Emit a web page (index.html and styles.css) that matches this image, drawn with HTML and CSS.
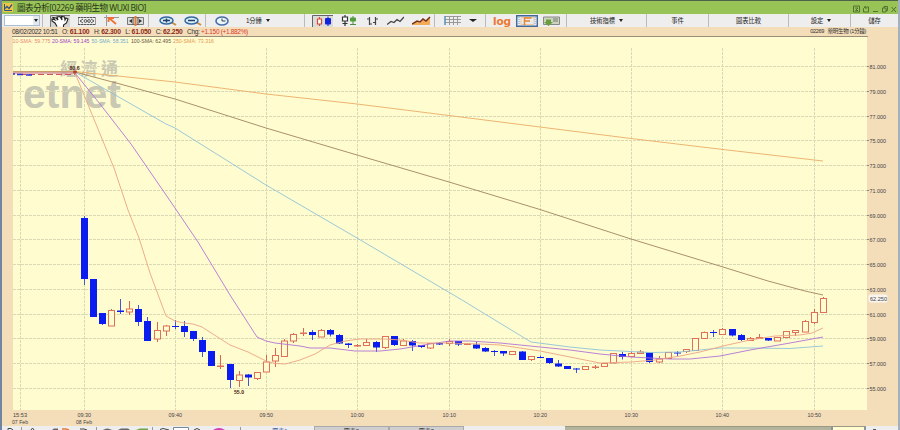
FILE: index.html
```
<!DOCTYPE html>
<html lang="zh-Hant">

<head>
    <meta charset="UTF-8">
    <title>圖表分析[02269 藥明生物 WUXI BIO]</title>
    <link rel="stylesheet" href="styles.css">
</head>

<body>
    <div class="window">

        <div class="titlebar">
            <svg class="app-icon" width="10" height="9" viewBox="0 0 10 9">
                <rect width="10" height="9" fill="#f3c343" />
                <path d="M1.5 1v6.5H9" stroke="#31547f" fill="none" />
                <path d="M2 5.5l2-2 2 2 3-4" stroke="#31547f" fill="none" stroke-width="1.3" />
            </svg>
            <span class="title">圖表分析[02269 藥明生物 WUXI BIO]</span>
            <svg class="controls" width="44" height="8" viewBox="0 0 44 8" fill="none" stroke="#496a2c" stroke-width=".9">
                <path d="M.5 1h6v6h-6zM2 3h3L2.500 5.500H5" />
                <path d="M10.500 3.500v3.500h5v-5h-2M10.500 3.500l2-2M11 2h2v2" />
                <path d="M20 6.500h5M29.500 3h3.500v4h-3.500zM31 3V1.500h3.500v4H33M38.500 2l4.500 5M43 2l-4.500 5" />
            </svg>
        </div>

        <div class="toolbar">
            <div class="group select">
                <span class="combo"><i class="caret"></i></span>
            </div>
            <div class="group tools">
                <svg width="20" height="12" viewBox="0 0 20 12">
                    <rect width="20" height="12" fill="#d6d6d3" />
                    <path d="M.5 12V.5H20" stroke="#777" fill="none" />
                    <path d="M7 11.500L5 8 2 6V4l3 1-2-2.500 3 .5 2 2-1-3 3-.5 2 3.500-.5-3.500 3 .5.5 3 1-2 2 1-1.500 4-3 2v2" fill="#fff" stroke="#222" stroke-width="1.100" />
                </svg>
                <svg width="18" height="10" viewBox="0 0 18 10" fill="none" stroke="#555">
                    <rect x=".5" y="1.500" width="17" height="7" stroke="#999" />
                    <path d="M0 1.500h18M0 8.500h18" stroke-dasharray="2 1" />
                    <path d="M5 3L2 5l3 2M13 3l3 2-3 2" />
                    <circle cx="7.500" cy="5" r="1.400" />
                    <circle cx="11" cy="5" r="1.400" />
                </svg>
                <svg width="15" height="11" viewBox="0 0 15 11" fill="none">
                    <path d="M0 2.500h15M2.500 0v11" stroke="#999" />
                    <path d="M5 3l7 6M4.500 7V3H10" stroke="#ed7135" stroke-width="1.800" />
                </svg>
                <svg width="17" height="10" viewBox="0 0 17 10">
                    <path d="M.5 1.500h16v7H.5z" fill="#ddd" stroke="#777" />
                    <path d="M5 3v4L2 5zM12 3v4l3-2z" fill="#333" />
                    <path d="M7.500 0h2v10h-2z" fill="#e87b32" />
                    <path d="M6 1v8M11 1v8" stroke="#555" />
                </svg>
            </div>
            <div class="group zooms">
                <svg width="18" height="10" viewBox="0 0 18 10" fill="none">
                    <path d="M12 6l5 3" stroke="#c88d3c" stroke-width="2" />
                    <ellipse cx="7.500" cy="4.500" rx="6.500" ry="3.500" fill="#d9eef8" stroke="#34699f" stroke-width="1.500" />
                    <path d="M4 4.500h7M7.500 2.500v4" stroke="#203f65" stroke-width="1.500" />
                </svg>
                <svg width="18" height="10" viewBox="0 0 18 10" fill="none">
                    <path d="M12 6l5 3" stroke="#c88d3c" stroke-width="2" />
                    <ellipse cx="7.500" cy="4.500" rx="6.500" ry="3.500" fill="#d9eef8" stroke="#34699f" stroke-width="1.500" />
                    <path d="M4 4.500h7" stroke="#203f65" stroke-width="1.500" />
                </svg>
            </div>
            <div class="group interval">
                <svg width="14" height="10" viewBox="0 0 14 10" fill="none">
                    <ellipse cx="7" cy="5" rx="6" ry="4" fill="#edf4fa" stroke="#456faa" stroke-width="1.600" />
                    <path d="M7 2.500V5h3.500" stroke="#345" />
                </svg>
                <span>1分鐘</span><i class="caret"></i>
            </div>
            <div class="group types">
                <svg width="21" height="12" viewBox="0 0 21 12">
                    <rect width="21" height="12" fill="#dcdcda" />
                    <path d="M.5 12V.500H21" stroke="#666" fill="none" />
                    <path d="M7.500 2v2M7.500 9v2M5.500 4h4v5h-4z" stroke="#d44b31" fill="#fff" stroke-width="1.200" />
                    <path d="M16 1.500v9.500" stroke="#1522dc" />
                    <rect x="13" y="3" width="6" height="6.500" rx="1" fill="#1522dc" />
                </svg>
                <svg width="16" height="11" viewBox="0 0 16 11">
                    <path d="M4 0v2M4 6v5M1.500 2h5v4h-5zM1.500 8.500h5" stroke="#333" fill="#fff" stroke-width="1.200" />
                    <path d="M12 1v9M9 9.500h6" stroke="#4f8d3d" />
                    <rect x="9" y="2.500" width="6" height="4" rx="1" fill="#4f9d3d" />
                </svg>
                <svg width="14" height="10" viewBox="0 0 14 10" fill="none" stroke="#444" stroke-width="1.200">
                    <path d="M4.500 1v8M2 3h2.500M4.500 8H7M10.500 1v8M8 6.500h2.500M10.500 3H13" />
                </svg>
                <svg width="17" height="10" viewBox="0 0 17 10" fill="none" stroke="#444" stroke-width="1.300">
                    <path d="M0 8.500l4-3 3 1 3-3 3 2 4-4.500" />
                </svg>
                <svg width="19" height="10" viewBox="0 0 19 10">
                    <path d="M0 9l5-4 3 2 3-4 3 2 4-4v8z" fill="#f4aa57" />
                    <path d="M0 8l5-3 3 1 3-3 3 2 4-4" fill="none" stroke="#70301b" stroke-width="1.500" />
                </svg>
            </div>
            <div class="group grid-pick">
                <svg width="17" height="9" viewBox="0 0 17 9" fill="none" stroke="#999">
                    <path d="M1 .5h16M1 3.500h16M1 6.500h16M5.500 0v9M9.500 0v9M13.500 0v9" />
                    <path d="M1 0v9" stroke="#5792bb" stroke-width="1.500" />
                </svg>
                <i class="caret wide"></i>
            </div>
            <div class="group extras">
                <span class="log">log</span>
                <svg width="22" height="12" viewBox="0 0 22 12" fill="none">
                    <path d="M.7.700h20.600v10.600H.7z" fill="#e5edf3" stroke="#42699a" stroke-width="1.400" />
                    <path d="M3 2v8M19 2v8" stroke="#789cc0" stroke-dasharray="1 1" />
                    <path d="M5 2.500h13v7H5z" stroke="#f3c79f" />
                    <path d="M8.500 10V3h7M9 6h5" stroke="#ed812c" stroke-width="1.500" />
                </svg>
                <svg width="17" height="10" viewBox="0 0 17 10">
                    <path d="M.5 1h16v7.500H.5z" fill="#ccd5bd" stroke="#888" />
                    <path d="M10 3h5M10 5h5" stroke="#777" />
                    <path d="M3 3.500h5V6h2l-4.500 4L1 6h2z" fill="#6a9d3e" />
                </svg>
            </div>
            <div class="group menu menu-ta">技術指標<i class="caret"></i></div>
            <div class="group menu menu-event">事件</div>
            <div class="group menu menu-compare">圖表比較</div>
            <div class="group menu menu-set">設定<i class="caret"></i></div>
            <div class="group menu menu-save">儲存</div>
        </div>

        <div class="quote">
            <span class="time">08/02/2022 10:51</span>
            <span>O: <b>61.100</b></span>
            <span>H: <b>62.300</b></span>
            <span>L: <b>61.050</b></span>
            <span>C: <b>62.250</b></span>
            <span>Chg: <em>+1.150 (+1.882%)</em></span>
            <span class="symbol">02269 &nbsp; 藥明生物 (1分鐘)</span>
        </div>

        <svg class="chart" width="896" height="390" viewBox="2 36 896 390">
            <rect class="plot" x="13" y="36" width="854" height="374" />
            <path class="top-line" d="M12 36.500h856" />
            <g class="watermark">
                <text class="wm-cn" x="60" y="75" textLength="58">經濟通</text>
                <text class="wm-en" x="23" y="108" textLength="98" lengthAdjust="spacingAndGlyphs">etnet</text>
            </g>
            <g id="grid"></g>
            <g class="sma-legend">
                <text class="c10" x="12.500" y="43" textLength="38" lengthAdjust="spacingAndGlyphs">10-SMA: 59.775</text>
                <text class="c20" x="52" y="43" textLength="37.500" lengthAdjust="spacingAndGlyphs">20-SMA: 59.145</text>
                <text class="c50" x="91.500" y="43" textLength="37" lengthAdjust="spacingAndGlyphs">50-SMA: 58.351</text>
                <text class="c100" x="131" y="43" textLength="40" lengthAdjust="spacingAndGlyphs">100-SMA: 62.495</text>
                <text class="c250" x="173" y="43" textLength="41" lengthAdjust="spacingAndGlyphs">250-SMA: 73.316</text>
            </g>
            <g id="candles"></g>
            <g class="sma">
                <polyline class="l250" points="13,71.500 75,71.500 175,82 266,94 357,104 449,115.500 540,127 631,138.500 723,149.500 823,161" />
                <polyline class="l100" points="13,72 75,72 120,84 175,99 266,128 357,155 449,182 540,209.500 631,239 723,267 768,281 805,291 823,295" />
                <polyline class="l50" points="75,72 166,124 175,128 215,153 266,185 357,238 462,300 531,342 570,347 600,350 650,352.500 680,352 720,348 750,348 790,348.500 823,346" />
                <polyline class="l20" points="13,73 75,73 100,104 131,144 175,208 198,242 230,295 257,337 266,341 275,343 300,346 310,348 330,348 355,351 380,351 400,349 430,344 450,341 470,341 500,343 540,347 570,350 600,354 631,357 650,358 670,359 690,359 720,356 750,350 790,343 823,337" />
                <polyline class="l10" points="13,73 75,73 114,168 128,210 139,238 150,273 166,316 175,321 184,323 193,324 202,327 230,345 248,352 266,361 275,363.500 285,364 300,360 315,354 330,345 345,341 360,339 385,339 400,340 420,343 448,343 480,344 500,345 540,351 570,357 600,363 631,362 655,360 680,356 700,352 723,346 750,340 775,336 800,335 812,333 823,328" />
            </g>
            <path class="open-dash" d="M20 74.500h55" />
            <path class="open-dash blue" d="M13 74h2M17 74.500h6M26 75h6" />
            <path class="mark" d="M75 70v4M73 71l4 2M77 71l-4 2" />
            <text class="extreme" x="74.500" y="69.500">80.6</text>
            <text class="extreme" x="239" y="393.500">55.0</text>
            <g id="axis"></g>
            <rect class="last-tag" x="868.500" y="294.500" width="19" height="8" rx="2" />
            <text class="label" x="870" y="301" textLength="17" lengthAdjust="spacingAndGlyphs">62.250</text>
        </svg>

        <div class="bottom">
            <svg class="bottom-icons" width="244" height="4" viewBox="2 426 244 4">
                <path d="M8 430v-1.500h3l2 1.500M31 430l1.500-2 1.500 2M80 429h4l3 1M194 430q3-3 6 0M160 429.500l3-1 6 1.500" stroke="#444" fill="none" />
                <path d="M52 430l2-1.500h4v1.500zM103 430q4-3 9 0zM118 430l3-1.500h7l2 1.500z" fill="#666" />
                <path d="M62 429h4l3 1" stroke="#e57c35" stroke-width="1.400" fill="none" />
                <path d="M136 430l4-1.500h8v1.500z" fill="#71a348" />
                <path d="M173.500 430v-2.500h15v2.500" fill="#fff" stroke="#789" />
                <path d="M213 430q6-4 12 0z" fill="#d43cae" />
                <path d="M21.500 427v3M96.500 427v3M152.500 427v3M240.500 427v3" stroke="#999" />
            </svg>
            <div class="tab current">圖表1</div>
            <div class="tab">圖表2</div>
            <div class="tab">圖表3</div>
            <div class="scroll"><span class="range"></span></div>
            <span class="up"></span>
        </div>
    </div>

    <script src="script.js"></script>
</body>

</html>
```
FILE: styles.css
```
body {
    margin: 0;
    background-color: #eee;
    font-family: "Liberation Sans", "Noto Sans CJK TC", sans-serif;
    color: #333;
}

.window {
    width: 896px;
    height: 430px;
    border-left: 2px solid #7185a3;
    border-right: 2px solid #a3b0bd;
    background-color: #f4deba;
    overflow: hidden;
}

svg {
    display: block;
    flex: none;
}

/* Title */

.titlebar {
    display: flex;
    align-items: center;
    box-sizing: border-box;
    height: 14px;
    border-top: 1px solid #4d6248;
    background-color: #98c356;
    padding-right: 1px;
}

.app-icon {
    margin-left: 1px;
}

.title {
    margin-left: 4px;
    font-family: "Open Sans", "Noto Sans CJK TC", sans-serif;
    font-size: 8.6px;
    line-height: 13px;
    letter-spacing: -0.52px;
    padding-top: 2px;
    color: #26351a;
    white-space: nowrap;
}

.controls {
    margin-left: auto;
    margin-top: 2px;
}

/* Toolbar */

.toolbar {
    display: flex;
    height: 13px;
    background-color: #eee;
    font-size: 6.3px;
    line-height: 13px;
    color: #222;
}

.group {
    display: flex;
    align-items: center;
    justify-content: space-between;
    flex: none;
    box-sizing: border-box;
    height: 13px;
    border-right: 1px solid #bbb;
    white-space: nowrap;
}

.caret {
    border: 2.5px solid transparent;
    border-top: 3px solid #222;
    border-bottom: 0;
    margin-left: 4px;
}

.caret.wide {
    border-left-width: 4px;
    border-right-width: 4px;
    margin-left: 0;
}

.select {
    width: 41px;
    padding-left: 2px;
}

.combo {
    display: flex;
    align-items: center;
    justify-content: flex-end;
    box-sizing: border-box;
    width: 36px;
    height: 11px;
    border: 1px solid #a9bfd1;
    background: linear-gradient(to right, #fff 28px, #e3e9ee 28px);
    padding-right: 1px;
}

.tools {
    width: 106px;
    padding: 0 4px 0 7px;
}

.zooms {
    width: 57px;
    padding: 0 3px 0 10px;
}

.interval {
    width: 99px;
    padding-left: 9px;
    justify-content: flex-start;
}

.interval span {
    margin-left: 17px;
    letter-spacing: -0.2px;
}

.types {
    width: 130px;
    padding: 0 3px 0 7px;
}

.grid-pick {
    width: 51px;
    padding: 0 8px 0 9px;
}

.extras {
    width: 81px;
    padding: 0 6px 0 7px;
}

.log {
    font: bold 10.5px/10px "DejaVu Sans", sans-serif;
    letter-spacing: -0.2px;
    color: #ed7930;
}

.menu {
    justify-content: center;
}

.menu-ta {
    width: 80px;
}

.menu-event {
    width: 62px;
}

.menu-compare {
    width: 80px;
}

.menu-set {
    width: 62px;
    padding-left: 3px;
}

.menu-save {
    width: 47px;
    border-right: 0;
}

/* Quote line */

.quote {
    display: flex;
    gap: 4.6px;
    height: 9px;
    padding: 0 32px 0 10px;
    font-size: 6.5px;
    line-height: 9px;
    letter-spacing: -0.32px;
    white-space: nowrap;
}

.quote b {
    color: #8c2a18;
    font-size: 6.8px;
    letter-spacing: -0.22px;
}

.quote em {
    color: #df3828;
    font-style: normal;
}

.quote .symbol {
    margin-left: auto;
    font-size: 5.6px;
    letter-spacing: -0.35px;
}

/* Chart */

.plot {
    fill: #fffdcf;
}

.top-line {
    stroke: #998e78;
}

.watermark {
    fill: #c9c8b3;
    font-weight: bold;
}

.wm-cn {
    font-size: 17px;
    font-family: "Noto Sans CJK TC", sans-serif;
}

.wm-en {
    font-size: 40px;
}

.grid-line {
    stroke: #d9d9b6;
    stroke-dasharray: 3 1;
}

.label {
    font-size: 5.8px;
    fill: #444;
}

.tick {
    stroke: #888;
}

.sma-legend {
    font-size: 5.8px;
}

.c10 { fill: #e88770; }
.c20 { fill: #a03cc6; }
.c50 { fill: #75a9cc; }
.c100 { fill: #685340; }
.c250 { fill: #e6974d; }

.sma polyline {
    fill: none;
    stroke-width: 0.9;
}

.sma .l10 { stroke: #eba483; }
.sma .l20 { stroke: #b273d8; }
.sma .l50 { stroke: #8fc2d8; }
.sma .l100 { stroke: #a08360; }
.sma .l250 { stroke: #eaac68; }

.up-candle {
    fill: #fffdcf;
    stroke: #df715a;
}

.down-candle {
    fill: #0a1cf0;
}

.up-wick {
    stroke: #d36854;
}

.down-wick {
    stroke: #4254dc;
}

.open-dash {
    stroke: #cf5560;
    stroke-dasharray: 6 3;
}

.open-dash.blue {
    stroke: #2a2fd8;
    stroke-width: 1.5;
    stroke-dasharray: none;
}

.mark {
    stroke: #b33a25;
}

.extreme {
    font-size: 5.2px;
    font-weight: bold;
    fill: #4c1c12;
    text-anchor: middle;
}

.last-tag {
    fill: #f8f5ef;
}

/* Bottom strip */

.bottom {
    display: flex;
    height: 4px;
    background-color: #eee;
    overflow: hidden;
}

.tab {
    box-sizing: border-box;
    width: 75px;
    height: 4px;
    border: 1px solid #aaa;
    border-bottom: 0;
    background-color: #cfcfcf;
    font-size: 6px;
    line-height: 8px;
    text-align: center;
    overflow: hidden;
}

.tab.current {
    width: 68px;
    border: 0;
    padding-top: 1px;
    background-color: #eee;
    color: #2b4c91;
}

.scroll {
    display: flex;
    justify-content: flex-end;
    box-sizing: border-box;
    width: 301px;
    height: 4px;
    margin-left: 101px;
    border-top: 1px solid #999985;
    background-color: #b4b49c;
}

.range {
    box-sizing: border-box;
    width: 35px;
    border: 2px solid #8795a2;
    border-width: 0 2px;
    background-color: #fffdcf;
}

.up {
    width: 3px;
    height: 2px;
    margin: 3px 0 0 7px;
    background-color: #555;
}
```
FILE: script.js
```
const NS = "http://www.w3.org/2000/svg";
const STEP = 9.127;
const X0 = 84;

// high, body top, body bottom, low, 1 = up / 0 = down; one row a minute from 09:30
const candles = [
    [216, 218, 279, 285, 0], [279, 279, 317, 317, 0], [313, 313, 324, 325, 0], [309, 310.5, 326, 326, 1],
    [299, 310.5, 312, 314, 0], [301, 309, 312, 315, 1], [305, 309, 322, 326, 0], [317, 321, 341, 341, 0],
    [322, 330.5, 339, 342, 1], [325, 326, 331, 336, 1], [320, 326, 327, 329, 0], [321, 326, 332, 337, 0],
    [331, 331, 339, 341, 0], [337, 340, 352, 357, 0], [351, 351, 366, 366, 0], [355, 366, 366.5, 369, 1],
    [364, 364, 380, 388, 0], [371, 375, 380.5, 387, 1], [374, 374.5, 377.5, 386, 0], [372, 372.5, 378.5, 380, 1],
    [355, 362, 372, 372, 1], [348, 355.5, 361, 367, 1], [339, 341, 356.5, 357, 1], [333, 334.5, 341, 343, 1],
    [328, 333, 333.5, 336, 1], [330, 332, 335, 340, 0], [329, 330.5, 337, 337, 1], [329, 330, 334.5, 336.5, 0],
    [334, 335, 343.5, 344, 0], [343, 343.5, 345, 348, 0], [344, 345.5, 346, 347, 1], [339, 342.5, 345.5, 346, 1],
    [341, 342, 347.5, 352, 0], [336, 336.5, 347.5, 349, 1], [336, 336, 345, 346, 0], [339, 341, 345.5, 346, 1],
    [340, 341, 345.5, 351, 0], [345, 345, 347, 348, 0], [343, 343.5, 348, 349, 1], [342, 343, 344.5, 345, 0],
    [339, 341.5, 343.5, 346, 1], [341, 341, 344.5, 346, 0], [343, 344, 344.5, 345, 1], [342, 344.5, 348.5, 349, 0],
    [347, 348, 351.5, 352, 0], [350, 351, 352, 356, 0], [351, 351, 353.5, 356, 0], [351, 351.5, 354.5, 355, 1],
    [351, 351.5, 360, 360, 0], [356, 356.5, 359.5, 361, 1], [355.5, 357, 358, 358, 0], [358, 358, 363, 364, 0],
    [360, 363.5, 366.5, 367, 0], [366, 366, 369, 369, 0], [368, 368.5, 369.5, 373, 0], [366, 366.5, 369.5, 370, 1],
    [365, 367, 367.5, 369, 1], [363, 363.5, 366.5, 367, 1], [353, 353.5, 363, 363, 1], [352, 354, 357, 359.5, 0],
    [352, 353.5, 356.5, 357, 1], [350, 352, 353.5, 354, 1], [352, 352.5, 362, 363, 0], [356, 359, 362, 363, 1],
    [352, 352.5, 358.5, 359, 1], [351, 352.5, 353.5, 356, 0], [349, 349.5, 351.5, 353, 1], [338, 338.5, 350.5, 351, 1],
    [331.5, 332.5, 338.5, 339, 1], [330, 332, 333, 337, 0], [328, 329.5, 334.5, 335, 1], [329, 329, 335.5, 336.5, 0],
    [334, 335, 340, 341, 0], [337, 338.5, 340.5, 341, 1], [334, 337.5, 338.5, 339, 1], [338, 338, 340.5, 341, 0],
    [337, 337.5, 341, 341, 1], [331, 331.5, 337.5, 338, 1], [330, 330.5, 332.5, 336, 1], [320, 321.5, 332, 332, 1],
    [309, 312.5, 322.5, 324, 1], [297, 298.5, 312.5, 313, 1]
];

function add(parent, tag, attrs, text) {
    const el = document.createElementNS(NS, tag);
    for (const key in attrs) {
        el.setAttribute(key, attrs[key]);
    }
    if (text) {
        el.textContent = text;
    }
    document.getElementById(parent).appendChild(el);
}

function label(x, y, width, text) {
    add("axis", "text", { class: "label", x: x, y: y, textLength: width, lengthAdjust: "spacingAndGlyphs" }, text);
}

// Price lines
for (let i = 0; i < 14; i++) {
    const y = Math.round(66 + i * 24.75) + 0.5;
    add("grid", "path", { class: "grid-line", d: `M13 ${y}H867` });
    add("axis", "path", { class: "tick", d: `M867 ${y}h2` });
    label(869.5, y + 2, 16.5, (81 - i * 2) + ".000");
}

// Time lines
const times = ["09:30", "09:40", "09:50", "10:00", "10:10", "10:20", "10:30", "10:40", "10:50"];
add("grid", "path", { class: "grid-line", d: "M20.5 48V410" });
label(13, 416.5, 14, "15:53");
label(12, 423.5, 16, "07 Feb");
label(76, 423.5, 16, "08 Feb");
times.forEach((time, i) => {
    const x = Math.floor(X0 + i * 10 * STEP) + 0.5;
    add("grid", "path", { class: "grid-line", d: `M${x} 48V410` });
    label(x - 7, 416.5, 13.5, time);
});

candles.forEach(([high, top, bottom, low, up], i) => {
    const x = Math.floor(X0 + i * STEP) + 0.5;
    const name = up ? "up" : "down";
    add("candles", "path", { class: name + "-wick", d: `M${x} ${high}V${low}` });
    add("candles", "rect", {
        class: name + "-candle",
        x: up ? x - 3 : x - 3.5,
        y: top,
        width: up ? 6 : 7,
        height: bottom - top
    });
});
```
